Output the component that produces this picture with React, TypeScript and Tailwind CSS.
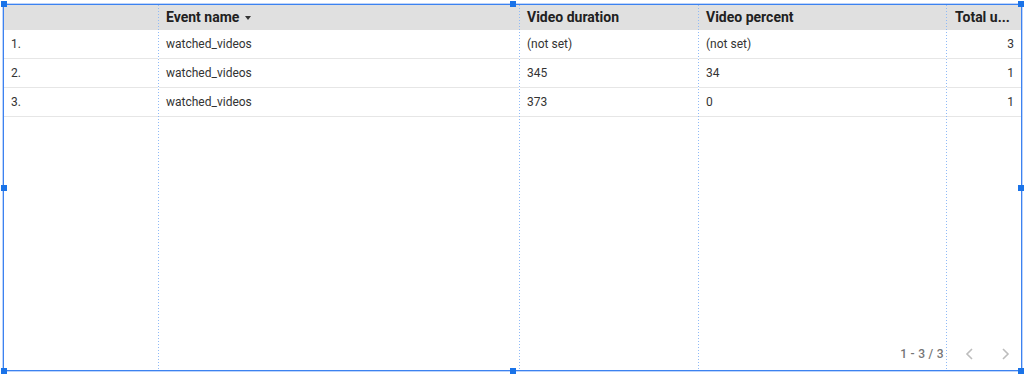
import React from "react";

const rows = [
  ["1.", "watched_videos", "(not set)", "(not set)", "3"],
  ["2.", "watched_videos", "345", "34", "1"],
  ["3.", "watched_videos", "373", "0", "1"],
];

const cols = [
  { w: "w-[154px]", head: "", align: "left", first: true },
  { w: "w-[360px]", head: "Event name", align: "left", sort: true },
  { w: "w-[178px]", head: "Video duration", align: "left" },
  { w: "w-[247px]", head: "Video percent", align: "left" },
  { w: "flex-1", head: "Total u...", align: "right" },
];

function Handle({ cls }: { cls: string }) {
  return <div className={`absolute w-[6px] h-[6px] bg-[#1a73e8] ${cls}`} />;
}

function Sep() {
  return (
    <div className="w-[1px] h-full shrink-0 [background:linear-gradient(#8fbaf7_50%,transparent_50%)_0_0/1px_3px_repeat-y,linear-gradient(#e0e0e0,#e0e0e0)_0_0/1px_25px_no-repeat]" />
  );
}

export default function App() {
  return (
    <div
      className="relative w-[1024px] h-[376px] bg-white overflow-hidden"
      style={{ fontFamily: "Roboto, 'Liberation Sans', sans-serif" }}
    >
      <div className="absolute left-[3px] top-[4px] w-[1019px] h-[367px] border border-[#3c82f0] shadow-[0_0_0_1px_rgba(66,133,244,0.35)] flex">
        {cols.map((c, ci) => (
          <React.Fragment key={ci}>
            {ci > 0 && <Sep />}
            <div className={`${c.w} h-full flex flex-col`}>
              <div
                className={`h-[25px] bg-[#e0e0e0] flex items-center text-[14px] font-bold text-[#212121] ${
                  c.align === "right" ? "pl-[8px]" : "pl-[7px]"
                }`}
              >
                {c.head}
                {c.sort && (
                  <svg width="6" height="4" viewBox="0 0 6 4" className="ml-[6px]">
                    <path d="M0 0 L6 0 L3 4 Z" fill="#333" />
                  </svg>
                )}
              </div>
              {rows.map((r, ri) => (
                <div
                  key={ri}
                  className={`h-[29px] border-b border-[#e6e6e6] flex items-center text-[12px] text-[#333] ${
                    c.align === "right" ? "justify-end pr-[7px]" : "pl-[7px]"
                  }`}
                >
                  {r[ci]}
                </div>
              ))}
            </div>
          </React.Fragment>
        ))}
        <div className="absolute right-[11px] bottom-[7px] flex items-center text-[12px] text-[#757575]">
          <span className="font-medium tracking-[0.3px]">1 - 3 / 3</span>
          <svg width="10" height="14" viewBox="0 0 10 14" className="ml-[21px]">
            <path d="M7 2 L2 7 L7 12" stroke="#bdbdbd" strokeWidth="1.6" fill="none" />
          </svg>
          <svg width="10" height="14" viewBox="0 0 10 14" className="ml-[25px]">
            <path d="M3 2 L8 7 L3 12" stroke="#bdbdbd" strokeWidth="1.6" fill="none" />
          </svg>
        </div>
      </div>
      <Handle cls="left-[1px] top-[1px]" />
      <Handle cls="left-[510px] top-[1px]" />
      <Handle cls="left-[1018px] top-[1px]" />
      <Handle cls="left-[1px] top-[185px]" />
      <Handle cls="left-[1018px] top-[185px]" />
      <Handle cls="left-[1px] top-[368px]" />
      <Handle cls="left-[510px] top-[368px]" />
      <Handle cls="left-[1018px] top-[368px]" />
    </div>
  );
}
